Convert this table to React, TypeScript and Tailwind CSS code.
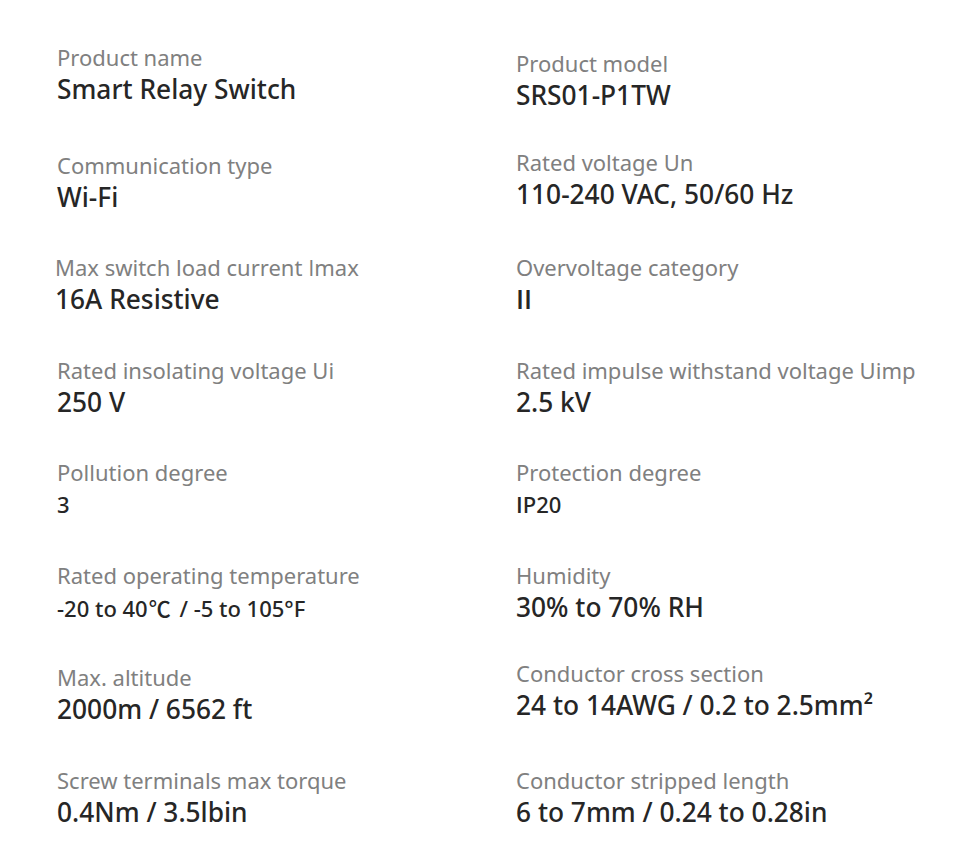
import React from "react";

interface Spec {
  label: string;
  value: string;
  small?: boolean;
  // nudge, the source sheet isn't perfectly aligned
  shift?: string;
}

const specs: Spec[] = [
  { label: "Product name", value: "Smart Relay Switch", shift: "-mt-[6px]" },
  { label: "Product model", value: "SRS01-P1TW", shift: "mt-[0px]" },
  { label: "Communication type", value: "Wi-Fi", shift: "-mt-[1px]" },
  { label: "Rated voltage Un", value: "110-240 VAC, 50/60 Hz", shift: "-mt-[4px]" },
  { label: "Max switch load current Imax", value: "16A Resistive", shift: "-ml-[2px] -mt-[1px]" },
  { label: "Overvoltage category", value: "II", shift: "-mt-[1px]" },
  { label: "Rated insolating voltage Ui", value: "250 V", shift: "-mt-[1px]" },
  { label: "Rated impulse withstand voltage Uimp", value: "2.5 kV", shift: "-mt-[1px]" },
  { label: "Pollution degree", value: "3", small: true, shift: "-mt-[1px]" },
  { label: "Protection degree", value: "IP20", small: true, shift: "-mt-[1px]" },
  { label: "Rated operating temperature", value: "-20 to 40℃ / -5 to 105°F", small: true, shift: "-mt-[1px]" },
  { label: "Humidity", value: "30% to 70% RH", shift: "-mt-[1px]" },
  { label: "Max. altitude", value: "2000m / 6562 ft", shift: "-mt-[1px]" },
  { label: "Conductor cross section", value: "24 to 14AWG / 0.2 to 2.5mm²", shift: "-mt-[5px]" },
  { label: "Screw terminals max torque", value: "0.4Nm / 3.5lbin", shift: "-mt-[1px]" },
  { label: "Conductor stripped length", value: "6 to 7mm / 0.24 to 0.28in", shift: "-mt-[1px]" },
];

// Noto Sans draws a serifed capital I, the sheet uses a plain bar
function Txt({ text, bold }: { text: string; bold?: boolean }) {
  const parts = text.split(/(I|℃)/);
  return (
    <>
      {parts.map((p, i) =>
        p === "I" ? (
          <span
            key={i}
            className={bold ? "font-['Open_Sans',sans-serif] font-semibold" : "font-['Open_Sans',sans-serif]"}
          >
            I
          </span>
        ) : p === "℃" ? (
          <span key={i} className="ml-[1px] mr-[3px] font-['Noto_Sans_CJK_SC',sans-serif]">
            ℃
          </span>
        ) : (
          p
        )
      )}
    </>
  );
}

function SpecItem({ label, value, small, shift }: Spec) {
  return (
    <div className={`flex flex-col ${shift ?? ""}`}>
      <span className="text-[22px] leading-[28px] text-[#808080]">
        <Txt text={label} />
      </span>
      <span
        className={
          small
            ? "mt-[2px] text-[22px] leading-[32px] font-medium text-[#262626]"
            : "mt-[2px] text-[26.3px] leading-[32px] font-medium text-[#262626]"
        }
      >
        <Txt text={value} bold />
      </span>
    </div>
  );
}

export default function App() {
  return (
    <div className="min-h-[851px] w-[970px] bg-white pl-[57px] pt-[49px] font-['Noto_Sans','Noto_Sans_CJK_SC',sans-serif]">
      <div className="grid grid-cols-[459px_1fr] auto-rows-[102.5px]">
        {specs.map((s) => (
          <SpecItem key={s.label} {...s} />
        ))}
      </div>
    </div>
  );
}
